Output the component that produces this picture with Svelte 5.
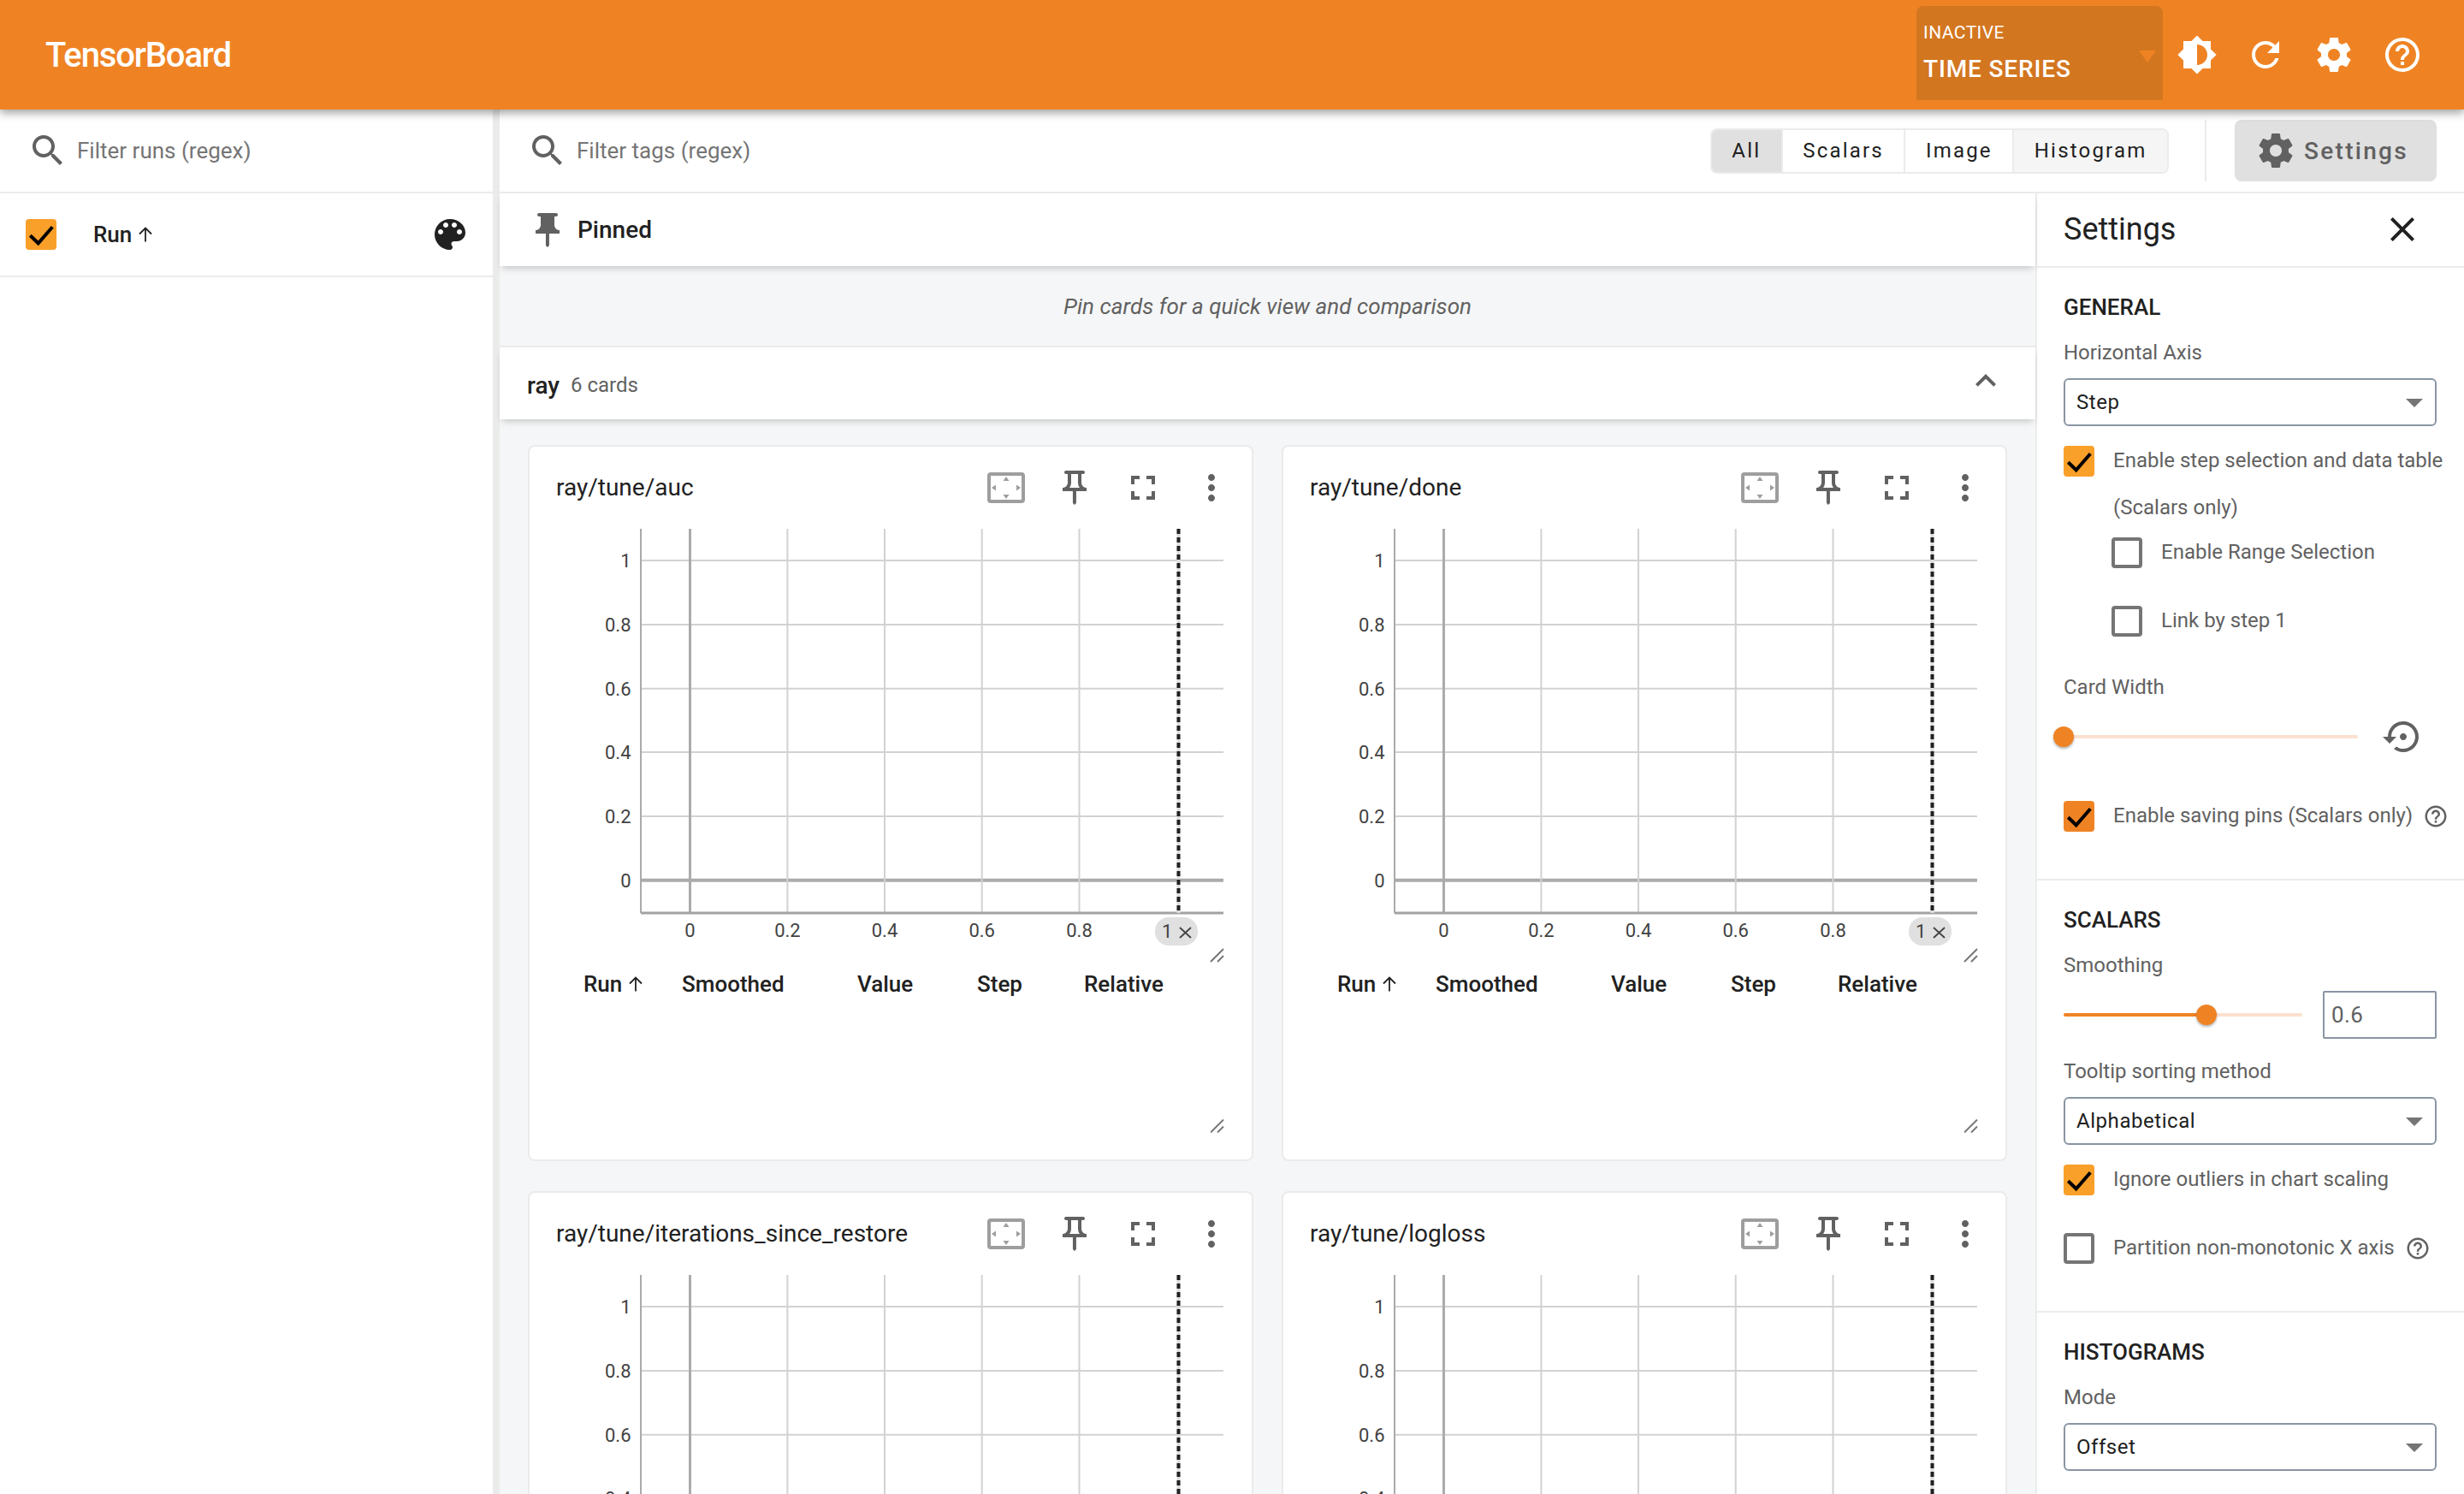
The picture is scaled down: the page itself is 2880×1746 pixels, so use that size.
<script>
  // material icon paths, 24x24 box
  const icons = {
    search: 'M15.5 14h-.79l-.28-.27C15.41 12.59 16 11.11 16 9.5 16 5.91 13.09 3 9.5 3S3 5.91 3 9.5 5.91 16 9.5 16c1.61 0 3.09-.59 4.23-1.57l.27.28v.79l5 4.99L20.49 19l-4.99-5zm-6 0C7.01 14 5 11.99 5 9.5S7.01 5 9.5 5 14 7.01 14 9.5 11.99 14 9.5 14z',
    brightness: 'M20 15.31L23.31 12 20 8.69V4h-4.69L12 .69 8.69 4H4v4.69L.69 12 4 15.31V20h4.69L12 23.31 15.31 20H20v-4.69zM12 18V6c3.31 0 6 2.69 6 6s-2.69 6-6 6z',
    refresh: 'M17.65 6.35C16.2 4.9 14.21 4 12 4c-4.42 0-7.99 3.58-7.99 8s3.57 8 7.99 8c3.73 0 6.84-2.55 7.73-6h-2.08c-.82 2.33-3.04 4-5.65 4-3.31 0-6-2.69-6-6s2.69-6 6-6c1.66 0 3.14.69 4.22 1.78L13 11h7V4l-2.35 2.35z',
    settings: 'M19.43 12.98c.04-.32.07-.64.07-.98s-.03-.66-.07-.98l2.11-1.65c.19-.15.24-.42.12-.64l-2-3.46c-.12-.22-.39-.3-.61-.22l-2.49 1c-.52-.4-1.08-.73-1.69-.98l-.38-2.65C14.46 2.18 14.25 2 14 2h-4c-.25 0-.46.18-.49.42l-.38 2.65c-.61.25-1.17.59-1.69.98l-2.49-1c-.23-.09-.49 0-.61.22l-2 3.46c-.13.22-.07.49.12.64l2.11 1.65c-.04.32-.07.65-.07.98s.03.66.07.98l-2.11 1.65c-.19.15-.24.42-.12.64l2 3.46c.12.22.39.3.61.22l2.49-1c.52.4 1.08.73 1.69.98l.38 2.65c.03.24.24.42.49.42h4c.25 0 .46-.18.49-.42l.38-2.65c.61-.25 1.17-.59 1.69-.98l2.49 1c.23.09.49 0 .61-.22l2-3.46c.12-.22.07-.49-.12-.64l-2.11-1.65zM12 15.5c-1.93 0-3.5-1.57-3.5-3.5s1.57-3.5 3.5-3.5 3.5 1.57 3.5 3.5-1.57 3.5-3.5 3.5z',
    help: 'M11 18h2v-2h-2v2zm1-16C6.48 2 2 6.48 2 12s4.48 10 10 10 10-4.48 10-10S17.52 2 12 2zm0 18c-4.41 0-8-3.59-8-8s3.59-8 8-8 8 3.59 8 8-3.59 8-8 8zm0-14c-2.21 0-4 1.79-4 4h2c0-1.1.9-2 2-2s2 .9 2 2c0 2-3 1.75-3 5h2c0-2.25 3-2.5 3-5 0-2.21-1.79-4-4-4z',
    palette: 'M12 3c-4.97 0-9 4.03-9 9s4.03 9 9 9c.83 0 1.5-.67 1.5-1.5 0-.39-.15-.74-.39-1.01-.23-.26-.38-.61-.38-.99 0-.83.67-1.5 1.5-1.5H16c2.76 0 5-2.24 5-5 0-4.42-4.03-8-9-8zm-5.5 9c-.83 0-1.5-.67-1.5-1.5S5.67 9 6.5 9 8 9.67 8 10.5 7.33 12 6.5 12zm3-4C8.67 8 8 7.33 8 6.5S8.67 5 9.5 5s1.5.67 1.5 1.5S10.33 8 9.5 8zm5 0c-.83 0-1.5-.67-1.5-1.5S13.67 5 14.5 5s1.5.67 1.5 1.5S15.33 8 14.5 8zm3 4c-.83 0-1.5-.67-1.5-1.5S16.67 9 17.5 9s1.5.67 1.5 1.5-.67 1.5-1.5 1.5z',
    pinFilled: 'M16 9V4h1c.55 0 1-.45 1-1s-.45-1-1-1H7c-.55 0-1 .45-1 1s.45 1 1 1h1v5c0 1.66-1.34 3-3 3v2h5.97v7l1 1 1-1v-7H19v-2c-1.66 0-3-1.34-3-3z',
    pinOutline: 'M14 4v5c0 1.12.37 2.16 1 3H9c.65-.86 1-1.9 1-3V4h4m3-2H7c-.55 0-1 .45-1 1s.45 1 1 1h1v5c0 1.66-1.34 3-3 3v2h5.97v7l1 1 1-1v-7H19v-2c-1.66 0-3-1.34-3-3V4h1c.55 0 1-.45 1-1s-.45-1-1-1z',
    fullscreen: 'M7 14H5v5h5v-2H7v-3zm-2-4h2V7h3V5H5v5zm12 7h-3v2h5v-5h-2v3zM14 5v2h3v3h2V5h-5z',
    more: 'M12 8c1.1 0 2-.9 2-2s-.9-2-2-2-2 .9-2 2 .9 2 2 2zm0 2c-1.1 0-2 .9-2 2s.9 2 2 2 2-.9 2-2-.9-2-2-2zm0 6c-1.1 0-2 .9-2 2s.9 2 2 2 2-.9 2-2-.9-2-2-2z',
    expandLess: 'M12 8l-6 6 1.41 1.41L12 10.83l4.59 4.58L18 14z',
    close: 'M19 6.41L17.59 5 12 10.59 6.41 5 5 6.41 10.59 12 5 17.59 6.41 19 12 13.41 17.59 19 19 17.59 13.41 12z',
    restore: 'M14 12c0-1.1-.9-2-2-2s-2 .9-2 2 .9 2 2 2 2-.9 2-2zm-2-9c-4.97 0-9 4.03-9 9H0l4 4 4-4H5c0-3.87 3.13-7 7-7s7 3.13 7 7-3.13 7-7 7c-1.51 0-2.91-.49-4.06-1.3l-1.42 1.44C8.04 20.3 9.94 21 12 21c4.97 0 9-4.03 9-9s-4.03-9-9-9z',
  };

  const cards = [
    'ray/tune/auc',
    'ray/tune/done',
    'ray/tune/iterations_since_restore',
    'ray/tune/logloss',
  ];

  const tags = ['All', 'Scalars', 'Image', 'Histogram'];
  const columns = ['Smoothed', 'Value', 'Step', 'Relative'];

  // chart geometry, svg coords
  const plot = { left: 99, right: 780, top: 0, bottom: 449 };
  const yTicks = [
    { label: '1', y: 37 },
    { label: '0.8', y: 112 },
    { label: '0.6', y: 186.7 },
    { label: '0.4', y: 261 },
    { label: '0.2', y: 336 },
    { label: '0', y: 410.7 },
  ];
  const xTicks = [
    { label: '0', x: 156.5 },
    { label: '0.2', x: 270.4 },
    { label: '0.4', x: 384 },
    { label: '0.6', x: 497.7 },
    { label: '0.8', x: 611.5 },
  ];
</script>

{#snippet icon(name, cls = '')}
  <svg class="icon {cls}" viewBox="0 0 24 24" aria-hidden="true"><path d={icons[name]} /></svg>
{/snippet}

{#snippet sortArrow()}
  <svg class="sort" viewBox="0 0 24 24" aria-hidden="true"><path d="M12 20.5V5M5 11.5L12 4.5 19 11.5" /></svg>
{/snippet}

{#snippet check(on = true, dark = false)}
  <span class="check" class:on class:dark>
    {#if on}
      <svg viewBox="0 0 36 36" aria-hidden="true"><path d="M5.3 19.3 14.7 28.3 31.3 9.3" /></svg>
    {/if}
  </span>
{/snippet}

{#snippet dropdown(value)}
  <div class="select">
    <span>{value}</span>
    <i class="select-arrow"></i>
  </div>
{/snippet}

<div class="page">
  <header class="toolbar">
    <span class="brand">TensorBoard</span>
    <div class="plugin-select">
      <span class="plugin-state">INACTIVE</span>
      <span class="plugin-name">TIME SERIES</span>
      <i class="plugin-arrow"></i>
    </div>
    <div class="toolbar-icons">
      {@render icon('brightness')}
      {@render icon('refresh')}
      {@render icon('settings')}
      {@render icon('help')}
    </div>
  </header>

  <div class="dashboard">
    <aside class="runs">
      <label class="filter runs-filter">
        {@render icon('search', 'grey')}
        <input placeholder="Filter runs (regex)" />
      </label>
      <div class="run-head">
        {@render check()}
        <span class="run-title">Run {@render sortArrow()}</span>
        {@render icon('palette', 'dark-icon')}
      </div>
    </aside>

    <div class="content">
      <div class="tag-bar">
        <label class="filter tag-filter">
          {@render icon('search', 'grey')}
          <input placeholder="Filter tags (regex)" />
        </label>
        <div class="tag-pills">
          {#each tags as tag, i}
            <span class="tag-pill" class:active={i === 0} class:last={i === 3}>{tag}</span>
          {/each}
        </div>
        <span class="bar-sep"></span>
        <button class="settings-btn">
          {@render icon('settings', 'grey')}
          Settings
        </button>
      </div>

      <div class="body">
        <main class="main">
          <div class="pinned-head">
            {@render icon('pinFilled', 'grey')}
            <span>Pinned</span>
          </div>
          <div class="pin-hint">Pin cards for a quick view and comparison</div>
          <div class="group-head">
            <span class="group-name">ray</span>
            <span class="group-count">6 cards</span>
            {@render icon('expandLess', 'grey chevron')}
          </div>

          <div class="grid">
            {#each cards as title}
              <section class="card">
                <div class="card-head">
                  <span class="card-title">{title}</span>
                  <svg class="icon fit" viewBox="0 0 24 24" aria-hidden="true">
                    <rect x="2" y="4" width="20" height="16" rx="1" />
                    <path d="M12 5.5l1.75 2.5h-3.5zM12 18.5l-1.75-2.5h3.5zM3.5 12L6 10.25v3.5zM20.5 12L18 13.75v-3.5z" />
                  </svg>
                  {@render icon('pinOutline', 'grey')}
                  {@render icon('fullscreen', 'grey')}
                  {@render icon('more', 'grey')}
                </div>
                <svg class="chart" viewBox="0 0 780 508" width="780" height="508">
                  {#each yTicks as t}
                    <line class={t.label === '0' ? 'zero-h' : 'grid-line'} x1={plot.left} x2={plot.right} y1={t.y} y2={t.y} />
                    <text class="tick" x="87.5" y={t.y + 8} text-anchor="end">{t.label}</text>
                  {/each}
                  {#each xTicks as t}
                    <line class={t.label === '0' ? 'zero-v' : 'grid-line'} x1={t.x} x2={t.x} y1={plot.top} y2={plot.bottom} />
                    <text class="tick" x={t.x} y="477" text-anchor="middle">{t.label}</text>
                  {/each}
                  <line class="axis-y" x1={plot.left} x2={plot.left} y1={plot.top} y2={plot.bottom} />
                  <line class="axis-x" x1={plot.left} x2={plot.right} y1={plot.bottom} y2={plot.bottom} />
                  <line class="step-under" x1="727.5" x2="727.5" y1={plot.top} y2={plot.bottom} />
                  <line class="step-line" x1="727.5" x2="727.5" y1={plot.top} y2={plot.bottom} />
                  <rect class="chip" x="700" y="454" width="50" height="33" rx="16" />
                  <text class="tick chip-text" x="708" y="478">1</text>
                  <path class="chip-x" d="M729 466l13 12m0-12l-13 12" />
                  <path class="grip" d="M765 506l15-15M773 506l7-7" />
                </svg>
                <div class="table-head">
                  <span class="run-col">Run {@render sortArrow()}</span>
                  {#each columns as col}
                    <span>{col}</span>
                  {/each}
                </div>
                <svg class="table-grip" viewBox="0 0 16 16" aria-hidden="true"><path d="M0 15.5L15 .5M8 15.5l7-7" /></svg>
              </section>
            {/each}
          </div>
        </main>

        <aside class="settings">
          <div class="settings-head">
            <span>Settings</span>
            {@render icon('close', 'dark-icon')}
          </div>

          <section class="panel-section">
            <h3>GENERAL</h3>
            <div class="field-label">Horizontal Axis</div>
            {@render dropdown('Step')}
            <div class="check-row wrap">
              {@render check()}
              <span class="check-label">Enable step selection and data table<br />(Scalars only)</span>
            </div>
            <div class="nested">
              <div class="check-row">
                {@render check(false)}
                <span class="check-label">Enable Range Selection</span>
              </div>
              <div class="check-row spaced">
                {@render check(false)}
                <span class="check-label">Link by step 1</span>
              </div>
            </div>
            <div class="field-label card-width">Card Width</div>
            <div class="slider-row">
              <div class="slider width-slider">
                <i class="thumb" style="left: 0%"></i>
              </div>
              {@render icon('restore', 'grey reset')}
            </div>
            <div class="check-row saving">
              {@render check(true, true)}
              <span class="check-label">Enable saving pins (Scalars only)</span>
              {@render icon('help', 'grey help-small')}
            </div>
          </section>

          <section class="panel-section">
            <h3>SCALARS</h3>
            <div class="field-label">Smoothing</div>
            <div class="slider-row smoothing">
              <div class="slider smooth-slider">
                <i class="fill" style="width: 60%"></i>
                <i class="thumb" style="left: 60%"></i>
              </div>
              <input class="number" value="0.6" />
            </div>
            <div class="field-label tooltip">Tooltip sorting method</div>
            {@render dropdown('Alphabetical')}
            <div class="check-row ignore">
              {@render check()}
              <span class="check-label">Ignore outliers in chart scaling</span>
            </div>
            <div class="check-row spaced">
              {@render check(false)}
              <span class="check-label">Partition non-monotonic X axis</span>
              {@render icon('help', 'grey help-small')}
            </div>
          </section>

          <section class="panel-section last-section">
            <h3>HISTOGRAMS</h3>
            <div class="field-label">Mode</div>
            {@render dropdown('Offset')}
          </section>
        </aside>
      </div>
    </div>
  </div>
</div>

<style>
  :global(body) {
    margin: 0;
    font-family: Roboto, 'Liberation Sans', sans-serif;
    color: #212121;
  }

  .page {
    width: 2880px;
    height: 1746px;
    overflow: hidden;
    display: flex;
    flex-direction: column;
    background: #fff;
  }

  .icon {
    width: 48px;
    height: 48px;
    flex: none;
    display: block;
    fill: currentColor;
  }

  :global(.icon.grey) {
    color: #616161;
  }

  :global(.icon.dark-icon) {
    color: #212121;
  }

  .sort {
    display: inline-block;
    width: 24px;
    height: 24px;
    margin-left: -3px;
    vertical-align: -3px;
    fill: none;
    stroke: #212121;
    stroke-width: 1.8;
  }

  /* toolbar */
  .toolbar {
    height: 128px;
    flex: none;
    display: flex;
    align-items: center;
    background: #ef8324;
    color: #fff;
    position: relative;
    z-index: 3;
    box-shadow: 0 4px 10px rgba(0, 0, 0, 0.38);
  }

  .brand {
    margin-left: 53px;
    font-size: 40px;
    font-weight: 500;
    letter-spacing: -1.15px;
  }

  .plugin-select {
    margin-left: auto;
    width: 288px;
    height: 110px;
    margin-top: -4px;
    box-sizing: border-box;
    padding: 19px 8px 0;
    background: #d37620;
    border-radius: 8px 8px 0 0;
    display: flex;
    flex-direction: column;
    position: relative;
  }

  .plugin-state {
    font-size: 21px;
    line-height: 24px;
    letter-spacing: 0.45px;
  }

  .plugin-name {
    margin-top: 15px;
    font-size: 28px;
    line-height: 32px;
    font-weight: 500;
    letter-spacing: 0.85px;
  }

  .plugin-arrow {
    position: absolute;
    right: 8px;
    top: 52px;
    border-left: 10px solid transparent;
    border-right: 10px solid transparent;
    border-top: 14px solid #ef8324;
  }

  .toolbar-icons {
    display: flex;
    gap: 32px;
    margin-left: 16px;
    margin-right: 48px;
  }

  /* layout */
  .dashboard {
    flex: 1;
    min-height: 0;
    display: flex;
  }

  .runs {
    width: 576px;
    flex: none;
    box-sizing: content-box;
    border-right: 8px solid #ebebeb;
  }

  .filter {
    display: flex;
    align-items: center;
    gap: 11px;
  }

  .filter input {
    border: 0;
    outline: 0;
    padding: 0;
    flex: 1;
    min-width: 0;
    font: 400 26px Roboto, sans-serif;
    color: #212121;
    margin-left: -1px;
  }

  .filter input::placeholder {
    color: #757575;
    opacity: 1;
  }

  .runs-filter {
    height: 96px;
    padding-left: 32px;
    border-bottom: 2px solid #ebebeb;
  }

  .run-head {
    height: 96px;
    display: flex;
    align-items: center;
    padding-left: 30px;
    padding-right: 26px;
    border-bottom: 2px solid #ebebeb;
  }

  .run-title {
    margin-left: 43px;
    margin-right: auto;
    font-size: 26px;
    font-weight: 500;
  }

  .check {
    width: 36px;
    height: 36px;
    flex: none;
    box-sizing: border-box;
    border: 4px solid #757575;
    border-radius: 4px;
    display: block;
  }

  .check.on {
    border: 0;
    background: #f9a02a;
  }

  .check.dark {
    background: #ef8324;
  }

  .check svg {
    display: block;
    width: 36px;
    height: 36px;
    fill: none;
    stroke: #000;
    stroke-width: 4;
  }

  .content {
    flex: 1;
    min-width: 0;
    display: flex;
    flex-direction: column;
  }

  .tag-bar {
    height: 96px;
    flex: none;
    display: flex;
    align-items: center;
    border-bottom: 2px solid #ebebeb;
    padding-right: 32px;
  }

  .tag-filter {
    flex: 1;
    padding-left: 32px;
  }

  .tag-pills {
    display: flex;
    height: 53px;
    box-sizing: border-box;
    border: 2px solid #ebebeb;
    border-radius: 8px;
    overflow: hidden;
  }

  .tag-pill {
    display: flex;
    align-items: center;
    justify-content: center;
    box-sizing: border-box;
    min-width: 83px;
    padding: 0 23.5px;
    font-size: 24px;
    letter-spacing: 2.2px;
    border-right: 2px solid #ebebeb;
  }

  .tag-pill.active {
    background: #e0e0e0;
  }

  .tag-pill.last {
    border-right: 0;
    background: #f5f5f5;
  }

  .bar-sep {
    width: 2px;
    height: 72px;
    background: #ebebeb;
    margin-left: 42px;
    margin-right: 33px;
  }

  .settings-btn {
    width: 236px;
    height: 72px;
    border: 0;
    border-radius: 8px;
    background: #e0e0e0;
    color: #616161;
    display: flex;
    align-items: center;
    gap: 9px;
    padding: 0 0 0 24px;
    font: 500 28px Roboto, sans-serif;
    letter-spacing: 2.3px;
  }

  .body {
    flex: 1;
    min-height: 0;
    display: flex;
  }

  .main {
    flex: 1;
    min-width: 0;
    background: #f5f6f7;
  }

  .pinned-head {
    height: 85px;
    box-sizing: border-box;
    display: flex;
    align-items: center;
    gap: 11px;
    padding: 0 0 0 32px;
    background: #fff;
    font-size: 28px;
    font-weight: 500;
    box-shadow: 0 5px 8px -3px rgba(0, 0, 0, 0.22);
    position: relative;
  }

  .pin-hint {
    height: 95px;
    box-sizing: border-box;
    display: flex;
    align-items: center;
    justify-content: center;
    font-size: 26px;
    letter-spacing: 0.05px;
    font-style: italic;
    color: #616161;
    border-bottom: 2px solid #ebebeb;
  }

  .group-head {
    height: 84px;
    box-sizing: border-box;
    display: flex;
    align-items: center;
    padding: 4px 34px 0 32px;
    background: #fff;
    box-shadow: 0 5px 8px -3px rgba(0, 0, 0, 0.22);
    position: relative;
  }

  .group-name {
    font-size: 28px;
    font-weight: 500;
  }

  .group-count {
    margin-left: 13px;
    font-size: 24px;
    color: #616161;
  }

  :global(.icon.chevron) {
    margin-left: auto;
    margin-top: -11px;
  }

  .grid {
    display: grid;
    grid-template-columns: 848px 848px;
    gap: 35px 33px;
    padding: 30px 33px 0;
  }

  .card {
    height: 837px;
    box-sizing: border-box;
    position: relative;
    background: #fff;
    border-radius: 8px;
    border: 2px solid #ebebeb;
    padding: 0 0 0 31px;
  }

  .card-head {
    height: 74px;
    box-sizing: border-box;
    display: flex;
    align-items: flex-end;
    gap: 32px;
    padding: 0 23px 2px 0;
  }

  .card-title {
    margin-right: auto;
    font-size: 28px;
    line-height: 48px;
  }

  .fit {
    color: #9e9e9e;
  }

  .fit rect {
    fill: none;
    stroke: #9e9e9e;
    stroke-width: 2;
  }

  .chart {
    display: block;
    margin-top: 22px;
    overflow: visible;
  }

  .tick {
    font: 400 22px Roboto, sans-serif;
    fill: #424242;
  }

  .grid-line {
    stroke: #d2d2d2;
    stroke-width: 2;
  }

  .zero-h {
    stroke: #ababab;
    stroke-width: 4;
  }

  .zero-v {
    stroke: #ababab;
    stroke-width: 3;
  }

  .axis-y {
    stroke: #aaa;
    stroke-width: 2;
  }

  .axis-x {
    stroke: #a3a3a3;
    stroke-width: 3;
  }

  .step-under {
    stroke: #ddd;
    stroke-width: 4;
  }

  .step-line {
    stroke: #212121;
    stroke-width: 4;
    stroke-dasharray: 6 4;
  }

  .chip {
    fill: #e0e0e0;
  }

  .chip-x {
    fill: none;
    stroke: #424242;
    stroke-width: 1.8;
  }

  .grip,
  .table-grip path {
    fill: none;
    stroke: #777;
    stroke-width: 2;
  }

  .table-head {
    display: grid;
    grid-template-columns: 115px 205px 140px 125px auto;
    margin-top: 7px;
    padding-left: 32px;
    font-size: 26px;
    font-weight: 500;
    line-height: 34px;
  }

  .table-grip {
    position: absolute;
    right: 32px;
    bottom: 31px;
    width: 16px;
    height: 16px;
  }

  /* settings panel */
  .settings {
    width: 501px;
    flex: none;
    box-sizing: border-box;
    border-left: 2px solid #ebebeb;
  }

  .settings-head {
    height: 87px;
    box-sizing: border-box;
    display: flex;
    align-items: center;
    justify-content: space-between;
    padding: 0 48px 2px 31px;
    border-bottom: 2px solid #ebebeb;
    font-size: 36px;
  }

  .panel-section {
    padding: 30px 32px 55px 31px;
    border-bottom: 2px solid #ebebeb;
  }

  .last-section {
    border-bottom: 0;
  }

  h3 {
    margin: 0;
    font-size: 26px;
    line-height: 32px;
    font-weight: 500;
  }

  .field-label {
    margin-top: 21px;
    font-size: 24px;
    line-height: 32px;
    color: #616161;
  }

  .select {
    margin-top: 14px;
    height: 56px;
    box-sizing: border-box;
    border: 2px solid #8a95a3;
    border-radius: 6px;
    display: flex;
    align-items: center;
    justify-content: space-between;
    padding: 0 14px 0 13px;
    font-size: 24px;
    letter-spacing: 0.55px;
  }

  .select-arrow {
    border-left: 10px solid transparent;
    border-right: 10px solid transparent;
    border-top: 10px solid #757575;
    margin-top: 2px;
  }

  .check-row {
    display: flex;
    align-items: center;
    gap: 22px;
    margin-top: 23px;
  }

  .check-row.wrap {
    align-items: flex-start;
  }

  .check-row.wrap .check-label {
    margin-top: -10px;
    line-height: 55px;
  }

  .check-row.spaced {
    margin-top: 44px;
  }

  .check-row.saving {
    margin-top: 57px;
  }

  .check-row.ignore {
    margin-top: 23px;
  }

  .check-label {
    margin-top: -2px;
    font-size: 24px;
    color: #616161;
    white-space: nowrap;
  }

  :global(.icon.help-small) {
    width: 30px;
    height: 30px;
    margin-left: -10px;
  }

  .nested {
    margin-left: 56px;
    margin-top: 7px;
  }

  .nested .check-row:first-child {
    margin-top: 0;
  }

  .card-width {
    margin-top: 43px;
  }

  .slider-row {
    display: flex;
    align-items: center;
    margin-top: 24px;
    height: 36px;
  }

  .slider {
    height: 4px;
    background: #fbe0cf;
    border-radius: 2px;
    position: relative;
    flex: none;
  }

  .width-slider {
    width: 344px;
  }

  .smooth-slider {
    width: 279px;
  }

  .fill {
    position: absolute;
    left: 0;
    top: 0;
    height: 4px;
    background: #ef8324;
    border-radius: 2px;
  }

  .thumb {
    position: absolute;
    top: -10px;
    width: 24px;
    height: 24px;
    margin-left: -12px;
    border-radius: 50%;
    background: #ef8324;
    box-shadow: 0 2px 3px rgba(0, 0, 0, 0.3);
  }

  :global(.icon.reset) {
    margin-left: 29px;
  }

  .slider-row.smoothing {
    margin-top: 14px;
    height: 56px;
    justify-content: space-between;
  }

  .number {
    width: 133px;
    height: 56px;
    box-sizing: border-box;
    border: 2px solid #8a95a3;
    border-radius: 2px;
    padding: 0 8px;
    outline: 0;
    font: 400 26px Roboto, sans-serif;
    letter-spacing: 0.4px;
    color: #616161;
  }

  .tooltip {
    margin-top: 22px;
  }

  .panel-section:last-child {
    padding-bottom: 0;
  }
</style>
